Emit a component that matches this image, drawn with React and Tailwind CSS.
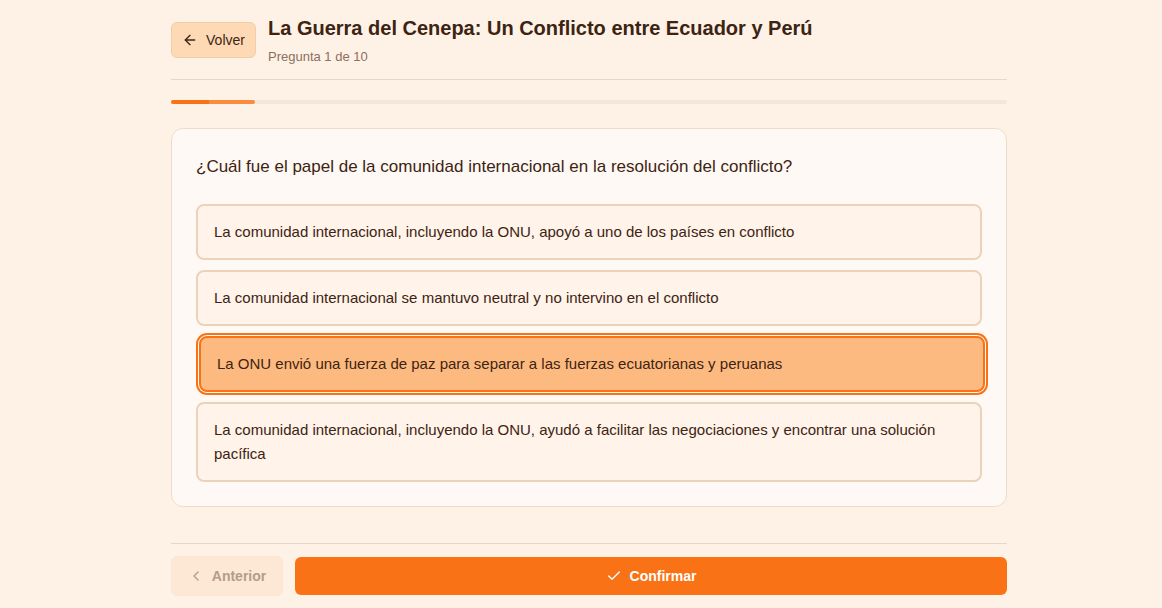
import React from "react";
import { ArrowLeft, ChevronLeft, Check } from "lucide-react";

const options = [
  "La comunidad internacional, incluyendo la ONU, apoyó a uno de los países en conflicto",
  "La comunidad internacional se mantuvo neutral y no intervino en el conflicto",
  "La ONU envió una fuerza de paz para separar a las fuerzas ecuatorianas y peruanas",
  "La comunidad internacional, incluyendo la ONU, ayudó a facilitar las negociaciones y encontrar una solución pacífica",
];

export default function App() {
  const selected = 2;
  return (
    <div
      className="min-h-[608px] w-full bg-[#fef2e7] text-[#3d2412]"
      style={{ fontFamily: '"Liberation Sans", Arial, sans-serif' }}
    >
      <div className="ml-[171px] w-[836px]">
        {/* Header */}
        <div className="flex items-center gap-3 border-b border-[#e8d6c6] pt-[14px] pb-[13px]">
          <button className="flex h-9 w-[85px] items-center justify-center gap-2 rounded-md border border-[#f3cda8] bg-[#fdd9b6] text-sm text-[#3d2412]">
            <ArrowLeft size={16} strokeWidth={2} />
            <span>Volver</span>
          </button>
          <div className="flex flex-col">
            <h1 className="text-[20px] font-bold leading-7 text-[#3d2412]">
              La Guerra del Cenepa: Un Conflicto entre Ecuador y Perú
            </h1>
            <p className="mt-[6px] text-[13px] leading-[18px] text-[#8c6f5c]">
              Pregunta 1 de 10
            </p>
          </div>
        </div>

        {/* Progress */}
        <div className="mt-5 flex h-1 w-full overflow-hidden rounded-full bg-[#f5e6da]">
          <div className="h-full w-[38px] bg-[#f97316]" />
          <div className="h-full w-[46px] rounded-r-full bg-[#fb8b3d]" />
        </div>

        {/* Card */}
        <div className="mt-6 rounded-xl border border-[#f0dcc8] bg-[#fff9f5] p-6">
          <p className="text-[17px] leading-[27px] text-[#3d2412]">
            ¿Cuál fue el papel de la comunidad internacional en la resolución del conflicto?
          </p>
          <div className="mt-6 flex flex-col gap-2.5">
            {options.map((o, i) =>
              i === selected ? (
                <div
                  key={i}
                  className="translate-x-[3px] rounded-lg border-2 border-[#f97316] bg-[#fdba80] px-4 py-3.5 text-[15px] leading-6 text-[#3d2412] ring-2 ring-[#f97316] ring-offset-1 ring-offset-[#fff9f5]"
                >
                  {o}
                </div>
              ) : (
                <div
                  key={i}
                  className="rounded-lg border-2 border-[#ebd3bb] bg-[#fff3ea] px-4 py-3.5 text-[15px] leading-6 text-[#3d2412]"
                >
                  {o}
                </div>
              )
            )}
          </div>
        </div>

        {/* Footer */}
        <div className="mt-9 flex items-center gap-3 border-t border-[#e8d6c6] pt-3">
          <button className="flex h-10 w-[112px] items-center justify-center gap-2 rounded-md border border-[#fde5d0] bg-[#fde8d6] text-sm font-semibold text-[#b49c8b]">
            <ChevronLeft size={16} strokeWidth={2} />
            <span>Anterior</span>
          </button>
          <button className="flex h-[38px] flex-1 items-center justify-center gap-2 rounded-md bg-[#f97316] text-sm font-bold text-white">
            <Check size={16} strokeWidth={2} />
            <span>Confirmar</span>
          </button>
        </div>
      </div>
    </div>
  );
}
